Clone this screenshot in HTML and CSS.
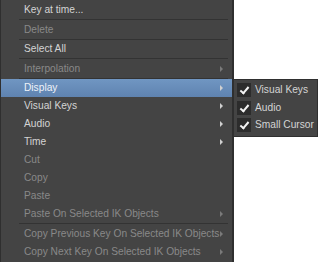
FILE: index.html
```html
<!DOCTYPE html>
<html lang="en">
<head>
    <meta charset="UTF-8">
    <title>Track Menu</title>
    <link rel="stylesheet" href="styles.css">
</head>
<body>
    <div class="stage">
        <ul class="menu">
            <li class="item">Key at time...</li>
            <li class="sep"></li>
            <li class="item off">Delete</li>
            <li class="sep"></li>
            <li class="item">Select All</li>
            <li class="sep"></li>
            <li class="item off sub">Interpolation</li>
            <li class="sep"></li>
            <li class="item sub active">Display</li>
            <li class="item sub">Visual Keys</li>
            <li class="item sub">Audio</li>
            <li class="item sub">Time</li>
            <li class="item off">Cut</li>
            <li class="item off">Copy</li>
            <li class="item off">Paste</li>
            <li class="item off sub">Paste On Selected IK Objects</li>
            <li class="sep"></li>
            <li class="item off sub">Copy Previous Key On Selected IK Objects</li>
            <li class="item off sub">Copy Next Key On Selected IK Objects</li>
        </ul>
        <ul class="menu submenu">
            <li class="item check">Visual Keys</li>
            <li class="item check">Audio</li>
            <li class="item check">Small Cursor</li>
        </ul>
    </div>
</body>
</html>
```

FILE: styles.css
```css
* {
    margin: 0;
    padding: 0;
    box-sizing: border-box;
}

body {
    font-family: 'Liberation Sans', Arial, sans-serif;
    font-size: 10.2px;
    background-color: #ffffff;
    width: 319px;
    height: 262px;
    overflow: hidden;
}

.stage {
    display: flex;
    align-items: flex-start;
}

.menu {
    list-style: none;
    background-color: #444444;
    color: #d4d4d4;
}

.menu:first-child {
    width: 234px;
    height: 262px;
    padding-top: 1px;
    border-left: 1px solid #2f2f2f;
    border-right: 2px solid #2f2f2f;
}

.item {
    position: relative;
    height: 18px;
    line-height: 18px;
    padding-left: 23px;
    white-space: nowrap;
}

.item.off {
    color: #898989;
}

/* submenu arrow */
.item.sub::after {
    content: "";
    position: absolute;
    left: 219px;
    top: 6px;
    border-left: 3px solid #d0d0d0;
    border-top: 3px solid transparent;
    border-bottom: 3px solid transparent;
}

.item.off.sub::after {
    border-left-color: #7a7a7a;
}

.item.active {
    background: linear-gradient(#7096c2, #5f83b0);
    color: #eef2f8;
}

.sep {
    height: 0;
    border-top: 1px solid #333333;
    margin: 0 4px 0.5px 18px;
}

.submenu {
    width: 84px;
    margin-top: 79px;
    padding: 1px 0 2px;
    border: 1px solid #2f2f2f;
    border-left: none;
}

.item.check {
    height: 17.5px;
    line-height: 17.5px;
    padding-left: 21px;
}

/* checkbox tick */
.item.check::before {
    content: "";
    position: absolute;
    left: 3px;
    top: 2px;
    width: 14px;
    height: 14px;
    background-color: #2c2c2c;
}

.item.check::after {
    content: "";
    position: absolute;
    left: 8px;
    top: 4px;
    width: 3px;
    height: 7px;
    border-right: 2px solid #f4f4f4;
    border-bottom: 2px solid #f4f4f4;
    transform: rotate(40deg);
}
```
